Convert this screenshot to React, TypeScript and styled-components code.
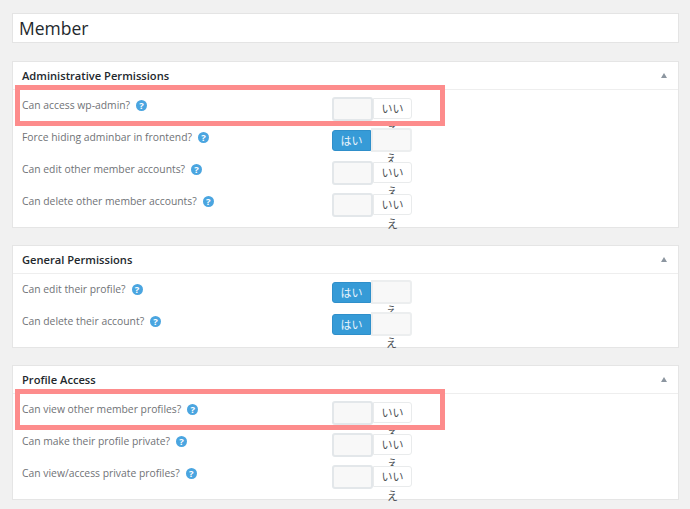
import React from "react"
import styled, { createGlobalStyle } from "styled-components"

interface Permission {
	label: string
	on?: boolean
	marked?: boolean
}

interface Section {
	title: string
	rows: Permission[]
}

const sections: Section[] = [
	{
		title: "Administrative Permissions",
		rows: [
			{ label: "Can access wp-admin?", marked: true },
			{ label: "Force hiding adminbar in frontend?", on: true },
			{ label: "Can edit other member accounts?" },
			{ label: "Can delete other member accounts?" }
		]
	},
	{
		title: "General Permissions",
		rows: [
			{ label: "Can edit their profile?", on: true },
			{ label: "Can delete their account?", on: true }
		]
	},
	{
		title: "Profile Access",
		rows: [
			{ label: "Can view other member profiles?", marked: true },
			{ label: "Can make their profile private?" },
			{ label: "Can view/access private profiles?" }
		]
	}
]

const App = () => {
	return (
		<Page>
			<GlobalStyle />
			<TitleBox>Member</TitleBox>
			{sections.map((section) => (
				<Panel key={section.title}>
					<PanelHeader>
						<PanelTitle>{section.title}</PanelTitle>
						<Caret />
					</PanelHeader>
					<PanelBody>
						{section.rows.map((row) => (
							<Row key={row.label}>
								<Label>
									{row.label}
									<Help>?</Help>
								</Label>
								<Toggle>
									<YesOption $on={!!row.on}>はい</YesOption>
									<NoOption $on={!!row.on}>
										<NoFirst $on={!!row.on}>いい</NoFirst>え
									</NoOption>
								</Toggle>
								{row.marked && <Highlight />}
							</Row>
						))}
					</PanelBody>
				</Panel>
			))}
		</Page>
	)
}

const GlobalStyle = createGlobalStyle`
	html, body {
		margin: 0;
		background: #f1f1f1;
	}
	body {
		font-family: "Open Sans", "Noto Sans CJK JP", sans-serif;
	}
`

const Page = styled.div`
	width: 690px;
	height: 509px;
	padding: 13px 11px 0 12px;
	box-sizing: border-box;
	overflow: hidden;
	display: flex;
	flex-direction: column;
	gap: 17px;
`

const TitleBox = styled.div`
	height: 30px;
	margin-bottom: 1px;
	box-sizing: border-box;
	border: 1px solid #e4e4e4;
	background: #fff;
	padding-left: 6px;
	font-size: 17.5px;
	line-height: 28px;
	color: #23282d;
`

const Panel = styled.section`
	background: #fff;
	border: 1px solid #e5e5e5;
`

const PanelHeader = styled.header`
	height: 27px;
	border-bottom: 1px solid #eee;
	display: flex;
	align-items: center;
	justify-content: space-between;
	padding: 0 11px 0 9px;
`

const PanelTitle = styled.h2`
	margin: 0;
	font-size: 11.15px;
	font-weight: 600;
	line-height: 27px;
	color: #23282d;
`

const Caret = styled.span`
	width: 0;
	height: 0;
	border-left: 3.5px solid transparent;
	border-right: 3.5px solid transparent;
	border-bottom: 5px solid #8c96a0;
`

const PanelBody = styled.div`
	padding: 7px 0 2px;
`

const Row = styled.div`
	position: relative;
	height: 32px;
	padding-left: 9px;
	display: flex;
	align-items: flex-start;
`

const Label = styled.div`
	width: 310px;
	display: flex;
	align-items: center;
	height: 17px;
	font-size: 10.35px;
	line-height: 17px;
	color: #6f7276;
`

const Help = styled.span`
	width: 11px;
	height: 11px;
	margin-left: 6px;
	border-radius: 50%;
	background: #4aa5e0;
	color: #fff;
	font-size: 9.5px;
	font-weight: 700;
	line-height: 11px;
	text-align: center;
`

const Toggle = styled.div`
	display: flex;
	align-items: flex-start;
	font-size: 11px;
	line-height: 19px;
`

const YesOption = styled.div<{ $on: boolean }>`
	box-sizing: border-box;
	text-align: center;
	border-radius: 3px 0 0 3px;
	${({ $on }) =>
		$on
			? `
		width: 39px;
		height: 21px;
		margin-top: 1px;
		background: #369bd7;
		border: 1px solid #2f8fca;
		color: #e6f3fb;
	`
			: `
		width: 41px;
		height: 24px;
		background: #f8f8f8;
		border: 2px solid #e3e7ea;
		border-radius: 3px;
		color: transparent;
	`}
`

const NoOption = styled.div<{ $on: boolean }>`
	box-sizing: border-box;
	color: #50555a;
	border-radius: 0 3px 3px 0;
	text-align: center;
	${({ $on }) =>
		$on
			? `
		width: 41px;
		height: 24px;
		margin-top: -1px;
		padding: 0 7px;
		background: #f8f8f8;
		border: 2px solid #eceeef;
	`
			: `
		width: 39px;
		height: 21px;
		margin-top: 1px;
		padding: 0 7px;
		background: #fff;
		border: 1px solid #e9ebec;
	`}
`

const NoFirst = styled.span<{ $on: boolean }>`
	color: ${({ $on }) => ($on ? "transparent" : "inherit")};
`

const Highlight = styled.div`
	position: absolute;
	left: 2px;
	top: -12px;
	width: 430px;
	height: 41px;
	box-sizing: border-box;
	border: 5px solid #fd8c8c;
`

export default App
